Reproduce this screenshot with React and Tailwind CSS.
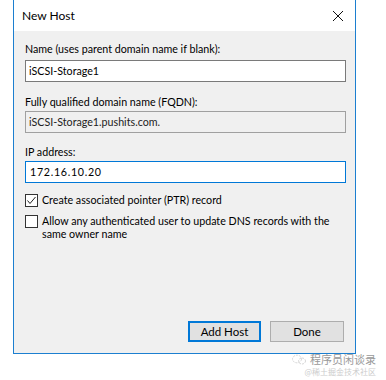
export default function App() {
  const font = { fontFamily: 'Lato, "Liberation Sans", sans-serif' };
  return (
    <div className="w-[386px] h-[380px] bg-white relative text-[#000]" style={font}>
      <div className="ml-[13px] w-[343px] h-[354px] border border-t-0 border-[#1c7fd0] flex flex-col">
        {/* Title bar */}
        <div className="h-[31px] bg-white flex items-center justify-between pl-[8px] pr-[10px]">
          <span className="text-[12px] leading-none mt-[1px]">New Host</span>
          <svg width="12" height="12" viewBox="0 0 12 12" className="mr-[1px]">
            <path d="M1 1 L11 11 M11 1 L1 11" stroke="#111" strokeWidth="1" fill="none" />
          </svg>
        </div>

        {/* Body */}
        <div className="flex-1 bg-[#f0f0f0] pl-[11px] pr-[9px] pt-[11px] flex flex-col text-[10.7px]">
          <div className="h-[14px] leading-[14px]">Name (uses parent domain name if blank):</div>
          <div className="mt-[4px] h-[22px] border border-[#7a7a7a] bg-white flex items-center px-[3px]">
            iSCSI-Storage1
          </div>

          <div className="mt-[13px] h-[14px] leading-[14px]">Fully qualified domain name (FQDN):</div>
          <div className="mt-[2px] h-[22px] border border-[#a0a0a0] bg-[#f0f0f0] flex items-center px-[3px] text-[#222]">
            iSCSI-Storage1.pushits.com.
          </div>

          <div className="mt-[12px] h-[14px] leading-[14px]">IP address:</div>
          <div className="mt-[2px] h-[22px] border border-[#0078d7] bg-white flex items-center px-[4px] tracking-[0.7px]">
            172.16.10.20
          </div>

          <div className="mt-[10px] flex items-center gap-[4px]">
            <div className="w-[13px] h-[13px] border border-[#333] bg-white flex items-center justify-center">
              <svg width="11" height="11" viewBox="0 0 11 11">
                <path d="M1.5 5.5 L4 8.5 L9.5 2" stroke="#222" strokeWidth="1" fill="none" />
              </svg>
            </div>
            <span className="leading-[14px]">Create associated pointer (PTR) record</span>
          </div>

          <div className="mt-[7px] flex items-start gap-[4px]">
            <div className="mt-[1px] w-[13px] h-[13px] shrink-0 border border-[#333] bg-white" />
            <span className="leading-[13px] whitespace-nowrap">
              Allow any authenticated user to update DNS records with the
              <br />
              same owner name
            </span>
          </div>

          <div className="mt-auto mb-[11px] flex justify-end gap-[9px] pr-[2px]">
            <button className="w-[73px] h-[21px] border-2 border-[#0078d7] bg-[#e1e1e1] text-[11.5px] leading-none">
              Add Host
            </button>
            <button className="w-[74px] h-[21px] border border-[#adadad] bg-[#e1e1e1] text-[11.5px] leading-none">
              Done
            </button>
          </div>
        </div>
      </div>

      {/* Watermark */}
      <div className="absolute left-[292px] top-[354px] flex flex-col items-end text-[#bbb]">
        <div className="flex items-center gap-[4px]">
          <svg width="14" height="11" viewBox="0 0 14 11">
            <ellipse cx="5" cy="5" rx="4.5" ry="3.8" stroke="#ccc" strokeWidth="0.8" fill="none" strokeDasharray="2 1" />
            <ellipse cx="10" cy="7" rx="3.5" ry="3" stroke="#ccc" strokeWidth="0.8" fill="none" strokeDasharray="2 1" />
          </svg>
          <span className="text-[11px] leading-none text-[#999]" style={{ fontFamily: '"Noto Sans CJK SC", sans-serif' }}>程序员闲谈录</span>
        </div>
        <span className="text-[8px] leading-none mt-[3px] text-[#ccc]" style={{ fontFamily: '"Noto Sans CJK SC", sans-serif' }}>@稀土掘金技术社区</span>
      </div>
    </div>
  );
}
